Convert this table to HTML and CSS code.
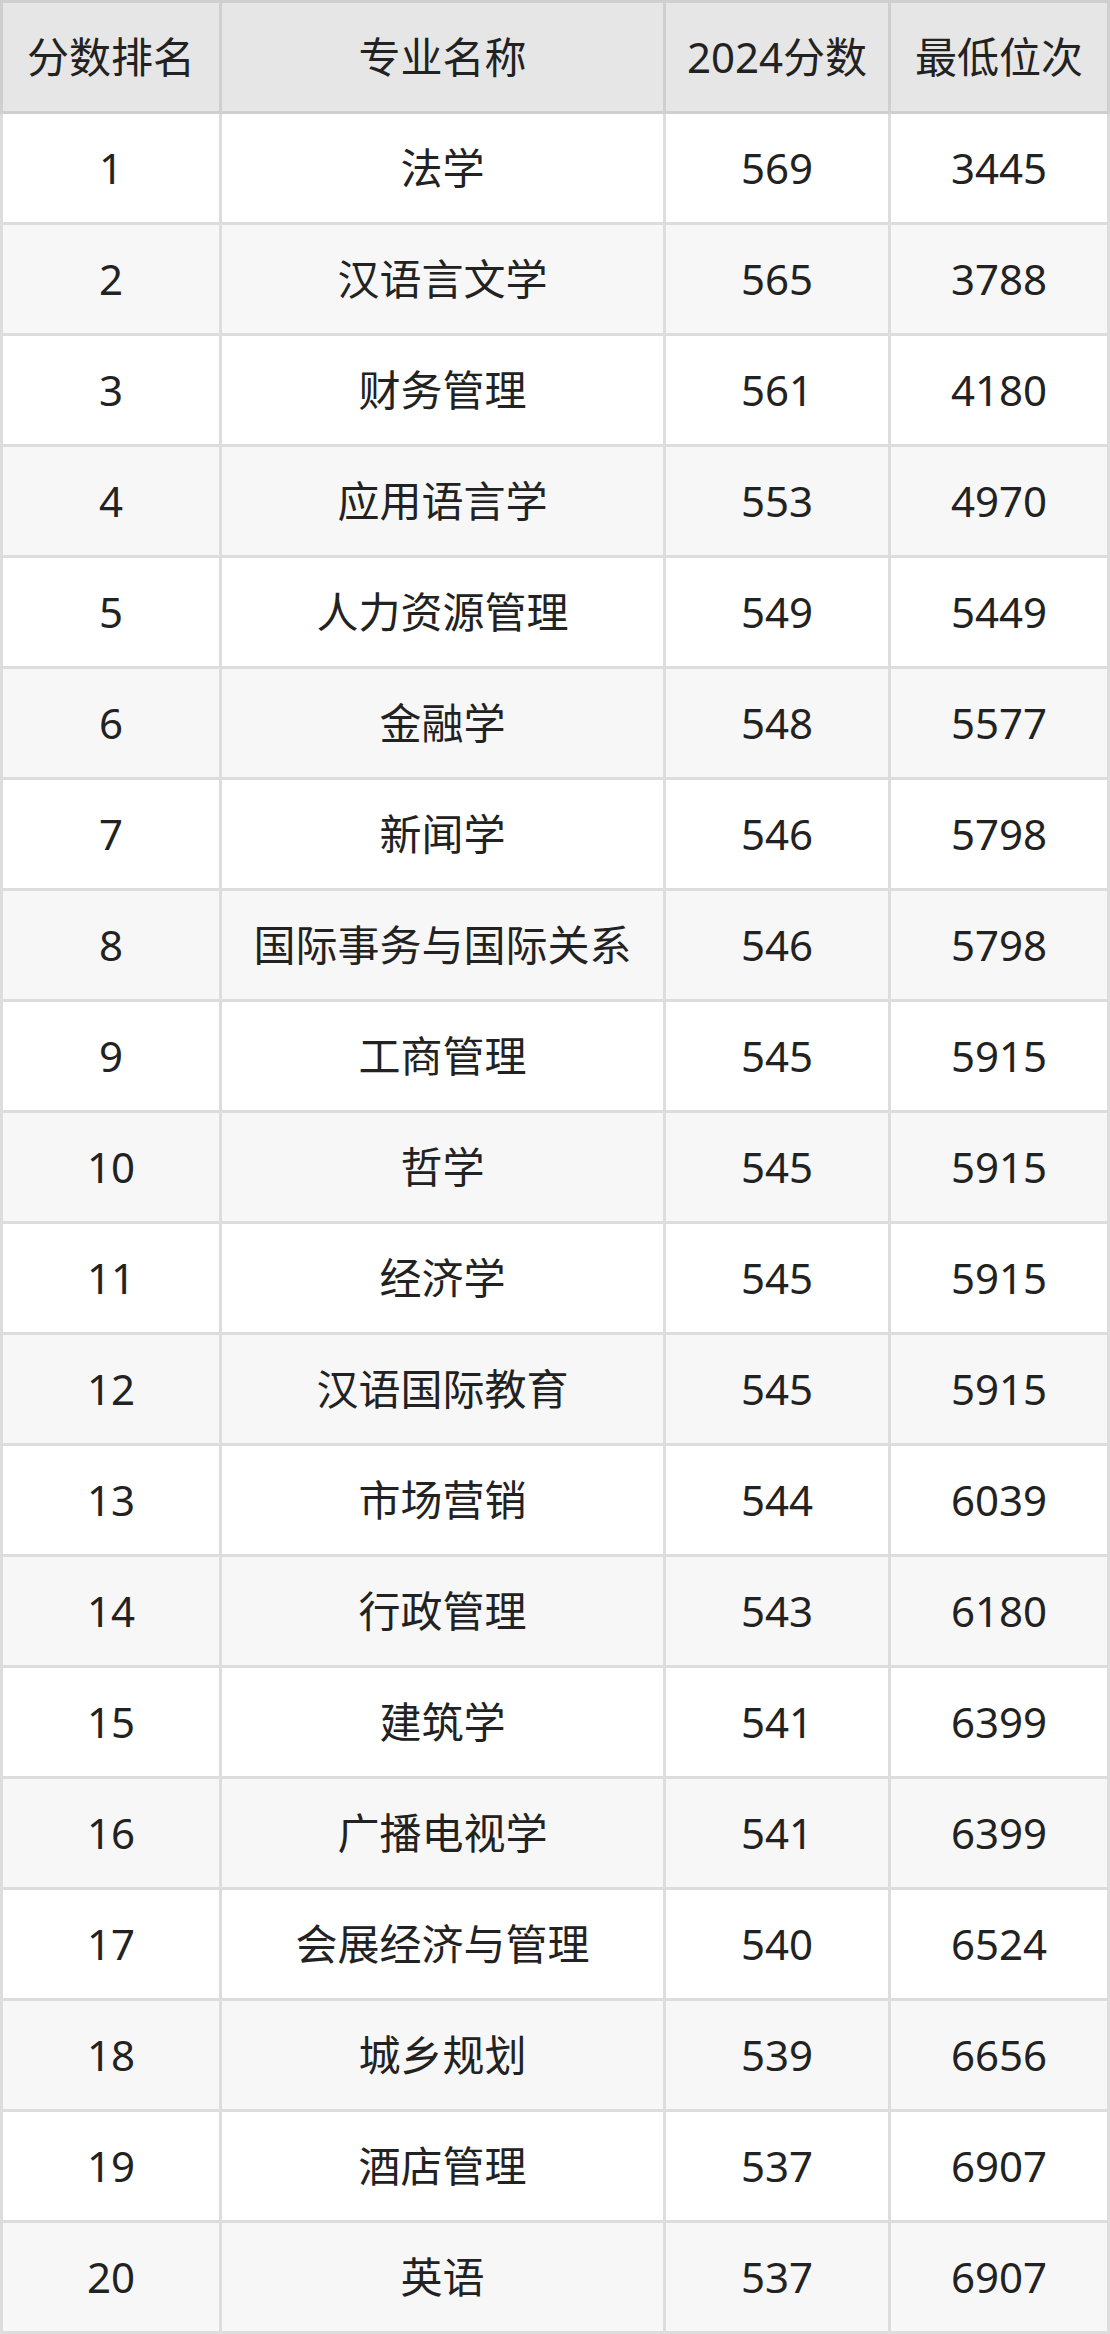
FILE: index.html
```html
<!DOCTYPE html>
<html lang="zh">
<head>
<meta charset="utf-8">
<title>分数排名</title>
<link rel="stylesheet" href="styles.css">
</head>
<body>
<div class="table">
  <div class="row head">
    <div class="cell first">分数排名</div><div class="cell">专业名称</div><div class="cell">2024分数</div><div class="cell">最低位次</div>
  </div>
  <div class="row"><div class="cell first">1</div><div class="cell">法学</div><div class="cell">569</div><div class="cell">3445</div></div>
  <div class="row even"><div class="cell first">2</div><div class="cell">汉语言文学</div><div class="cell">565</div><div class="cell">3788</div></div>
  <div class="row"><div class="cell first">3</div><div class="cell">财务管理</div><div class="cell">561</div><div class="cell">4180</div></div>
  <div class="row even"><div class="cell first">4</div><div class="cell">应用语言学</div><div class="cell">553</div><div class="cell">4970</div></div>
  <div class="row"><div class="cell first">5</div><div class="cell">人力资源管理</div><div class="cell">549</div><div class="cell">5449</div></div>
  <div class="row even"><div class="cell first">6</div><div class="cell">金融学</div><div class="cell">548</div><div class="cell">5577</div></div>
  <div class="row"><div class="cell first">7</div><div class="cell">新闻学</div><div class="cell">546</div><div class="cell">5798</div></div>
  <div class="row even"><div class="cell first">8</div><div class="cell">国际事务与国际关系</div><div class="cell">546</div><div class="cell">5798</div></div>
  <div class="row"><div class="cell first">9</div><div class="cell">工商管理</div><div class="cell">545</div><div class="cell">5915</div></div>
  <div class="row even"><div class="cell first">10</div><div class="cell">哲学</div><div class="cell">545</div><div class="cell">5915</div></div>
  <div class="row"><div class="cell first">11</div><div class="cell">经济学</div><div class="cell">545</div><div class="cell">5915</div></div>
  <div class="row even"><div class="cell first">12</div><div class="cell">汉语国际教育</div><div class="cell">545</div><div class="cell">5915</div></div>
  <div class="row"><div class="cell first">13</div><div class="cell">市场营销</div><div class="cell">544</div><div class="cell">6039</div></div>
  <div class="row even"><div class="cell first">14</div><div class="cell">行政管理</div><div class="cell">543</div><div class="cell">6180</div></div>
  <div class="row"><div class="cell first">15</div><div class="cell">建筑学</div><div class="cell">541</div><div class="cell">6399</div></div>
  <div class="row even"><div class="cell first">16</div><div class="cell">广播电视学</div><div class="cell">541</div><div class="cell">6399</div></div>
  <div class="row"><div class="cell first">17</div><div class="cell">会展经济与管理</div><div class="cell">540</div><div class="cell">6524</div></div>
  <div class="row even"><div class="cell first">18</div><div class="cell">城乡规划</div><div class="cell">539</div><div class="cell">6656</div></div>
  <div class="row"><div class="cell first">19</div><div class="cell">酒店管理</div><div class="cell">537</div><div class="cell">6907</div></div>
  <div class="row even"><div class="cell first">20</div><div class="cell">英语</div><div class="cell">537</div><div class="cell">6907</div></div>
</div>
</body>
</html>
```
FILE: styles.css
```css
html, body {
  margin: 0;
  padding: 0;
  background: #ffffff;
}
.table {
  width: 1110px;
  display: flex;
  flex-direction: column;
  font-family: "Noto Sans", "Noto Sans CJK SC", sans-serif;
  font-size: 42px;
  color: #222222;
}
.row {
  display: grid;
  grid-template-columns: 222px 444px 225px 219px;
  height: 111px;
  background: #ffffff;
}
.row.even {
  background: #f7f7f7;
}
.row.head {
  height: 114px;
  background: #e6e6e6;
}
.cell {
  box-sizing: border-box;
  display: flex;
  align-items: center;
  justify-content: center;
  border-right: 3px solid #dddddd;
  border-bottom: 3px solid #dddddd;
  white-space: nowrap;
  line-height: 1;
}
.cell.first {
  border-left: 3px solid #dddddd;
}
.head .cell {
  border-color: #cfcfcf;
  border-top: 3px solid #cfcfcf;
}
```
